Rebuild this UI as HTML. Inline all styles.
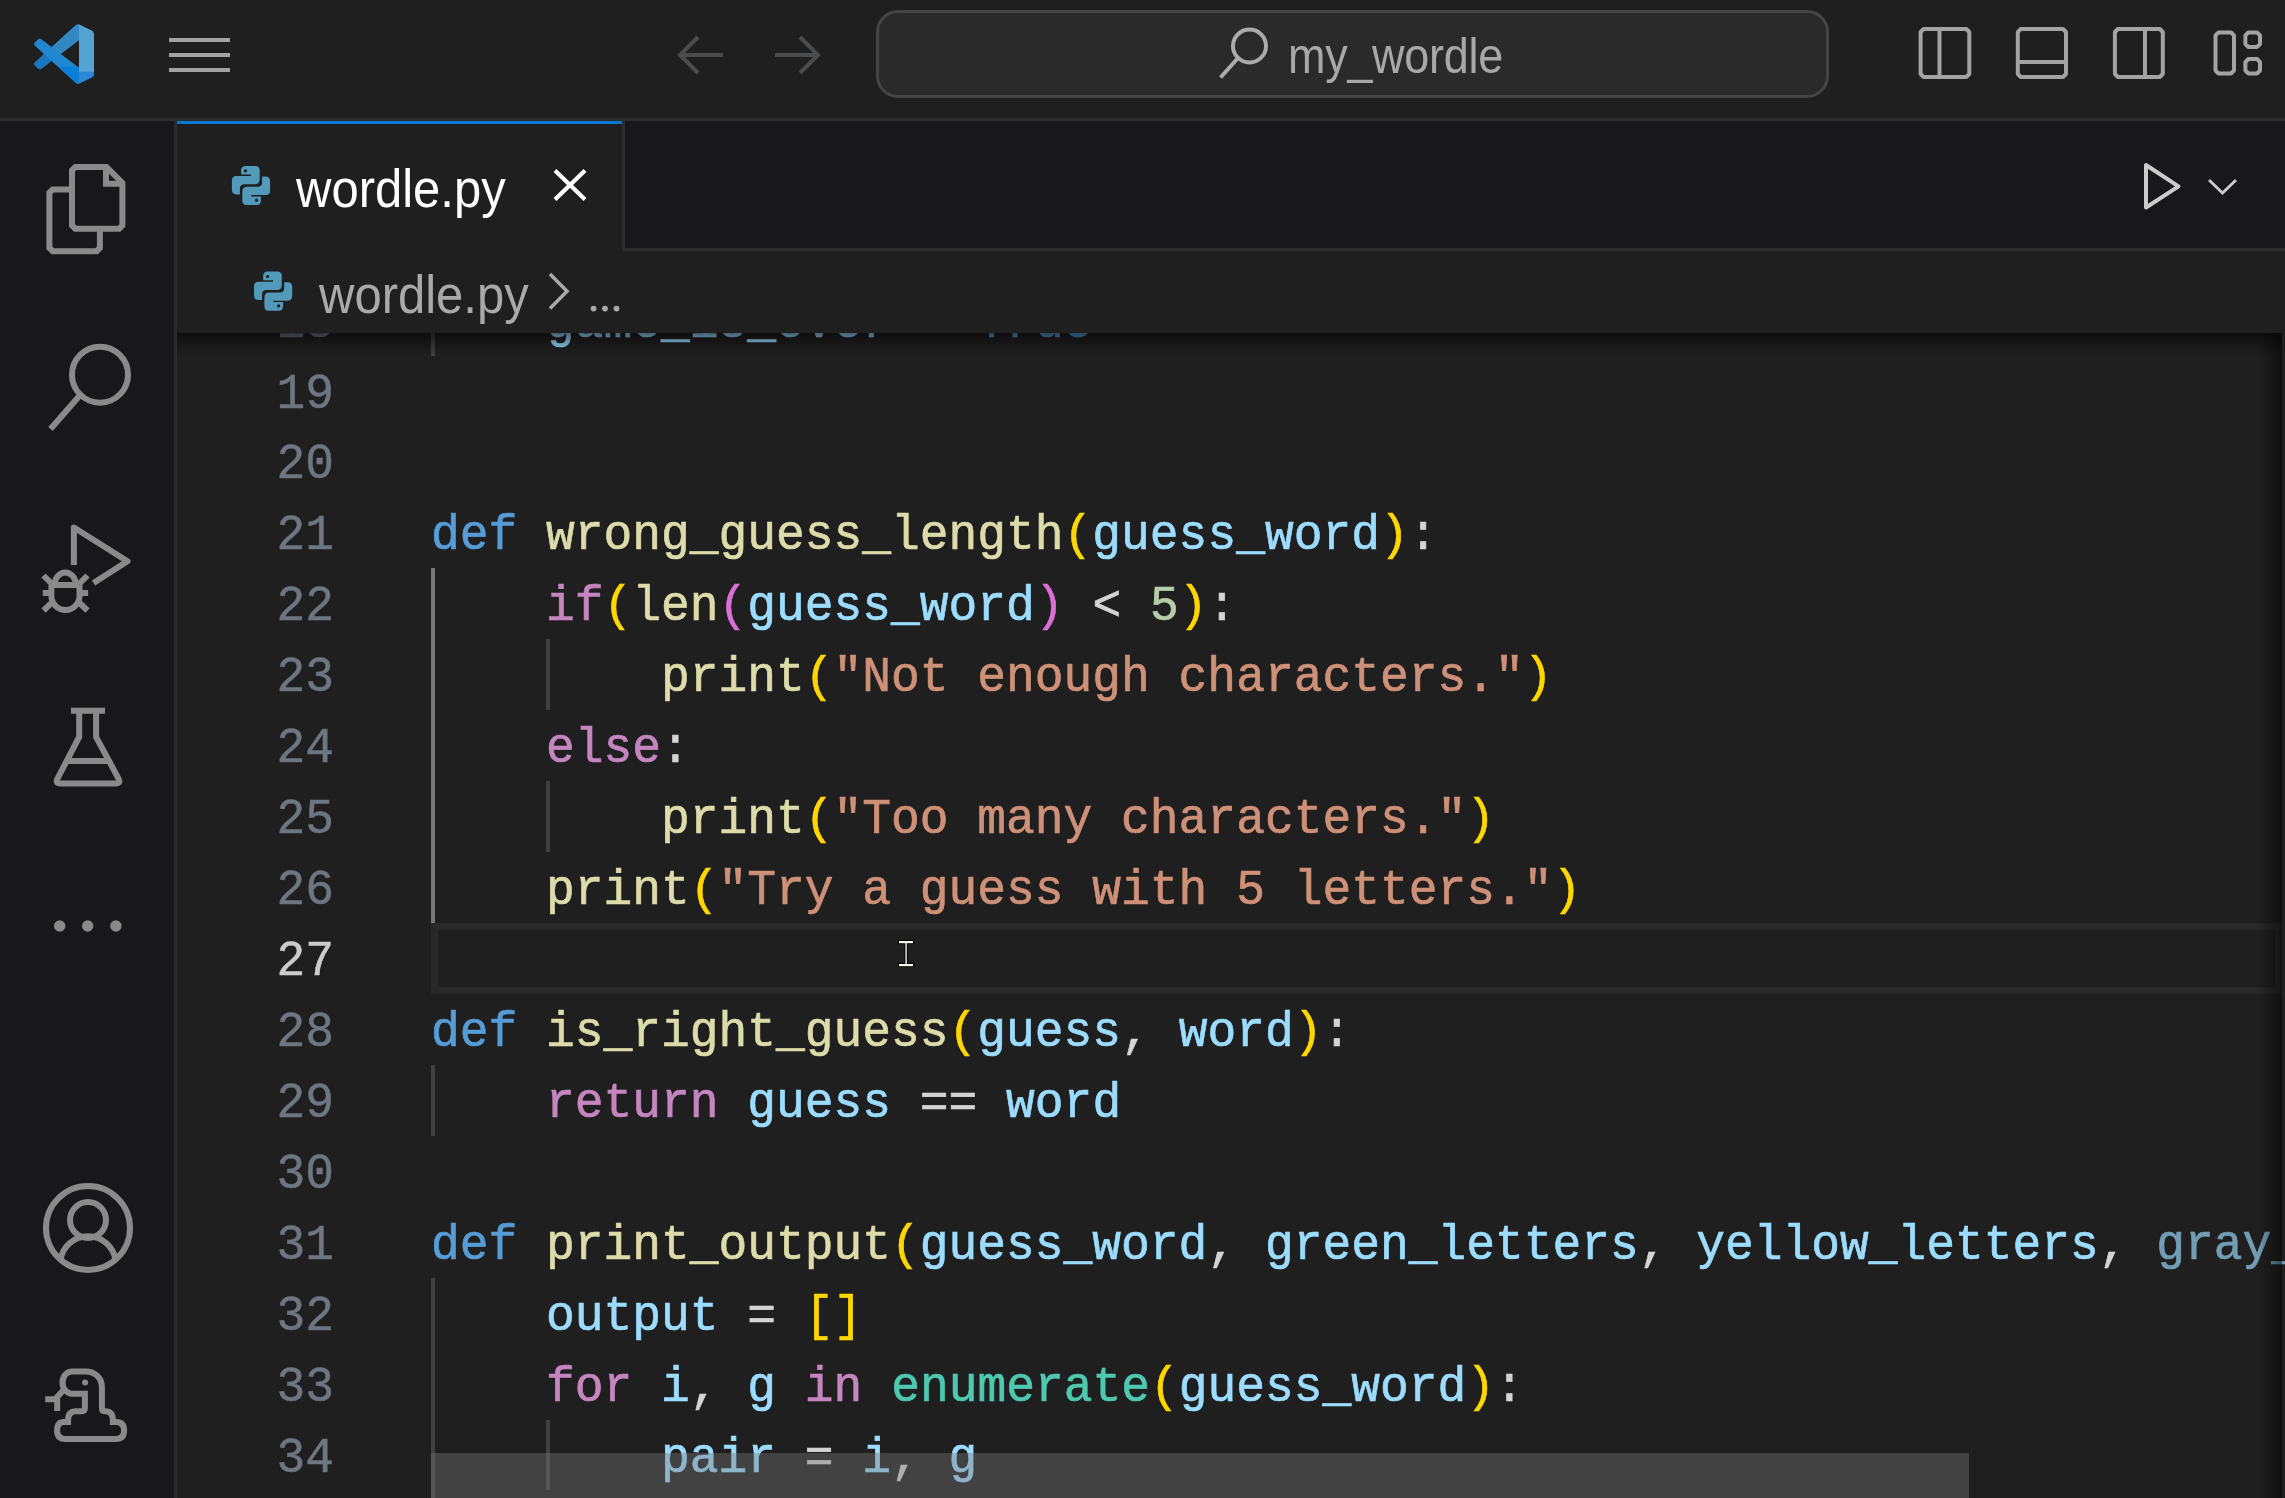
<!DOCTYPE html>
<html><head><meta charset="utf-8">
<style>
html,body{margin:0;padding:0;}
body{width:2285px;height:1498px;overflow:hidden;background:#1f1f1f;position:relative;font-family:"Liberation Sans",sans-serif;}
.abs{position:absolute;}
#titlebar{left:0;top:0;width:2285px;height:118px;background:#1f1f1f;}
#titleborder{left:0;top:118px;width:2285px;height:3px;background:#2b2c2e;}
#activity{left:0;top:121px;width:174px;height:1377px;background:#18181a;}
#actborder{left:174px;top:121px;width:3px;height:1377px;background:#2b2c2e;}
#tabstrip{left:177px;top:121px;width:2108px;height:127px;background:#18181a;}
#tabsborder{left:625px;top:248px;width:1660px;height:3px;background:#2b2c2e;}
#tab{left:177px;top:121px;width:445px;height:130px;background:#1f1f1f;}
#tabblue{left:177px;top:121px;width:445px;height:3px;background:#0078d4;}
#tabrborder{left:622px;top:121px;width:3px;height:130px;background:#2b2c2e;}
#cmd{left:876px;top:10px;width:947px;height:82px;border:3px solid #454545;border-radius:22px;background:#2a2a2a;}
.ui{position:absolute;white-space:pre;line-height:1;}
#tabtext{left:296px;top:162.4px;font-size:49px;color:#ffffff;transform-origin:left top;transform:scaleY(1.1);}
#crumbtext{left:319px;top:268.4px;font-size:49px;color:#a9a9a9;transform-origin:left top;transform:scaleY(1.098);}
#cmdtext{left:1288px;top:31.4px;font-size:45px;color:#a8a8a8;letter-spacing:-0.3px;transform-origin:left top;transform:scaleY(1.0925);}
#editor{left:177px;top:333px;width:2108px;height:1165px;overflow:hidden;}
.ln.act{color:#cccccc}
.ln{position:absolute;left:0;width:155px;text-align:right;font-family:"Liberation Mono",monospace;font-size:50px;color:#6e7681;height:71px;line-height:71px;transform-origin:right center;transform:translate(2px,3px) scaleX(0.9583);-webkit-text-stroke:0.5px currentColor;}
.code{position:absolute;left:254px;white-space:pre;font-family:"Liberation Mono",monospace;font-size:50px;color:#d4d4d4;height:71px;line-height:71px;transform-origin:left center;transform:translateY(3px) scaleX(0.9583);-webkit-text-stroke:0.7px currentColor;}
.k{color:#569cd6}.f{color:#dcdcaa}.v{color:#9cdcfe}.c{color:#c586c0}.s{color:#ce9178}.n{color:#b5cea8}.cl{color:#4ec9b0}.b1{color:#ffd700}.b2{color:#da70d6}.p{color:#d4d4d4}
.guide{position:absolute;width:4px;background:#404040;}
</style></head>
<body>
<div id="titlebar" class="abs"></div>
<div id="titleborder" class="abs"></div>
<div id="activity" class="abs"></div>
<div id="actborder" class="abs"></div>
<div id="tabstrip" class="abs"></div>
<div id="tabsborder" class="abs"></div>
<div id="tab" class="abs"></div>
<div id="tabblue" class="abs"></div>
<div id="tabrborder" class="abs"></div>
<div id="cmd" class="abs"></div>

<div id="tabtext" class="ui">wordle.py</div>
<div id="crumbtext" class="ui">wordle.py</div>
<div id="cmdtext" class="ui">my_wordle</div>

<div id="editor" class="abs">
<div class="guide" style="left:254px;top:-48.4px;height:71px;background:#404040"></div>
<div class="guide" style="left:254px;top:235.35px;height:354.65px;background:#777777"></div>
<div class="guide" style="left:369px;top:306.3px;height:70.9px"></div>
<div class="guide" style="left:369px;top:448.1px;height:70.9px"></div>
<div class="guide" style="left:254px;top:731.9px;height:70.9px"></div>
<div class="guide" style="left:254px;top:944.7px;height:230px"></div>
<div class="guide" style="left:369px;top:1086.6px;height:70.9px"></div>
<div id="curline" class="abs" style="left:254px;top:590px;width:1851px;height:71px;box-sizing:border-box;border:7px solid #282828;"></div>
<div class="ln" style="top:-48.37px">18</div>
<div class="code" style="top:-48.37px">    <span class="v">game_is_over</span><span class="p"> = </span><span class="k">True</span></div>
<div class="ln" style="top:22.56px">19</div>
<div class="ln" style="top:93.49px">20</div>
<div class="ln" style="top:164.42px">21</div>
<div class="code" style="top:164.42px"><span class="k">def</span> <span class="f">wrong_guess_length</span><span class="b1">(</span><span class="v">guess_word</span><span class="b1">)</span><span class="p">:</span></div>
<div class="ln" style="top:235.35px">22</div>
<div class="code" style="top:235.35px">    <span class="c">if</span><span class="b1">(</span><span class="f">len</span><span class="b2">(</span><span class="v">guess_word</span><span class="b2">)</span><span class="p"> < </span><span class="n">5</span><span class="b1">)</span><span class="p">:</span></div>
<div class="ln" style="top:306.28px">23</div>
<div class="code" style="top:306.28px">        <span class="f">print</span><span class="b1">(</span><span class="s">"Not enough characters."</span><span class="b1">)</span></div>
<div class="ln" style="top:377.21px">24</div>
<div class="code" style="top:377.21px">    <span class="c">else</span><span class="p">:</span></div>
<div class="ln" style="top:448.14px">25</div>
<div class="code" style="top:448.14px">        <span class="f">print</span><span class="b1">(</span><span class="s">"Too many characters."</span><span class="b1">)</span></div>
<div class="ln" style="top:519.07px">26</div>
<div class="code" style="top:519.07px">    <span class="f">print</span><span class="b1">(</span><span class="s">"Try a guess with 5 letters."</span><span class="b1">)</span></div>
<div class="ln act" style="top:590.00px">27</div>
<div class="ln" style="top:660.93px">28</div>
<div class="code" style="top:660.93px"><span class="k">def</span> <span class="f">is_right_guess</span><span class="b1">(</span><span class="v">guess</span><span class="p">, </span><span class="v">word</span><span class="b1">)</span><span class="p">:</span></div>
<div class="ln" style="top:731.86px">29</div>
<div class="code" style="top:731.86px">    <span class="c">return</span> <span class="v">guess</span><span class="p"> == </span><span class="v">word</span></div>
<div class="ln" style="top:802.79px">30</div>
<div class="ln" style="top:873.72px">31</div>
<div class="code" style="top:873.72px"><span class="k">def</span> <span class="f">print_output</span><span class="b1">(</span><span class="v">guess_word</span><span class="p">, </span><span class="v">green_letters</span><span class="p">, </span><span class="v">yellow_letters</span><span class="p">, </span><span class="v" style="opacity:0.67">gray_letters</span><span class="b1">)</span><span class="p">:</span></div>
<div class="ln" style="top:944.65px">32</div>
<div class="code" style="top:944.65px">    <span class="v">output</span><span class="p"> = </span><span class="b1">[]</span></div>
<div class="ln" style="top:1015.58px">33</div>
<div class="code" style="top:1015.58px">    <span class="c">for</span> <span class="v">i</span><span class="p">, </span><span class="v">g</span> <span class="c">in</span> <span class="cl">enumerate</span><span class="b1">(</span><span class="v">guess_word</span><span class="b1">)</span><span class="p">:</span></div>
<div class="ln" style="top:1086.51px">34</div>
<div class="code" style="top:1086.51px">        <span class="v">pair</span><span class="p"> = </span><span class="v">i</span><span class="p">, </span><span class="v">g</span></div>
<div class="abs" style="left:0;top:0;width:2105px;height:22px;background:linear-gradient(rgba(0,0,0,0.55),rgba(0,0,0,0));"></div>
<div class="abs" style="left:2081px;top:0;width:24px;height:1165px;background:linear-gradient(90deg,rgba(0,0,0,0),rgba(0,0,0,0.5));"></div>
<div class="abs" style="left:254px;top:1120px;width:1538px;height:45px;background:rgba(121,121,121,0.4);"></div>
</div>

<svg class="abs" style="left:0;top:0;pointer-events:none" width="2285" height="1498" viewBox="0 0 2285 1498">
<defs>
<mask id="vsm" maskUnits="userSpaceOnUse" x="0" y="0" width="100" height="100">
<path fill-rule="evenodd" d="M70.9119 99.3171C72.4869 99.9307 74.2828 99.8914 75.8725 99.1264L96.4608 89.2197C98.6242 88.1787 100 85.9892 100 83.5872V16.4133C100 14.0113 98.6243 11.8218 96.4609 10.7808L75.8725 0.873756C73.7862 -0.130129 71.3446 0.11576 69.5135 1.44695C69.252 1.63711 69.0028 1.84943 68.769 2.08341L29.3551 38.0415L12.1872 25.0096C10.589 23.7965 8.35363 23.8959 6.86933 25.2461L1.36303 30.2549C-0.452552 31.9064 -0.454633 34.7627 1.35853 36.417L16.2471 50.0001L1.35853 63.5832C-0.454633 65.2374 -0.452552 68.0938 1.36303 69.7453L6.86933 74.7541C8.35363 76.1043 10.589 76.2037 12.1872 74.9905L29.3551 61.9587L68.769 97.9167C69.3925 98.5406 70.1246 99.0104 70.9119 99.3171ZM75.0152 27.2989L45.1091 50.0001L75.0152 72.7012V27.2989Z" fill="white"/>
</mask>
<g id="py">
<path d="M16.1 14.6L16.1 10.4Q16.1 5.9 20.6 5.9L30.2 5.9Q34.7 5.9 34.7 10.4L34.7 19.3Q34.7 24.3 29.7 24.3L19.4 24.3Q14.9 24.3 14.9 28.8L14.9 34.4L11.5 34.4Q6.9 34.4 6.9 29.8L6.9 20.6Q6.9 16 11.5 16L25.9 16L25.9 14.6Z" fill="#519aba"/>
<circle cx="20.5" cy="10.8" r="1.6" fill="#1f1f1f"/>
<g transform="rotate(180 26 25.5)">
<path d="M16.1 14.6L16.1 10.4Q16.1 5.9 20.6 5.9L30.2 5.9Q34.7 5.9 34.7 10.4L34.7 19.3Q34.7 24.3 29.7 24.3L19.4 24.3Q14.9 24.3 14.9 28.8L14.9 34.4L11.5 34.4Q6.9 34.4 6.9 29.8L6.9 20.6Q6.9 16 11.5 16L25.9 16L25.9 14.6Z" fill="#519aba"/>
<circle cx="20.5" cy="10.8" r="1.6" fill="#1f1f1f"/>
</g>
</g>
</defs>
<!-- VS Code logo -->
<clipPath id="cb1"><rect x="-5" y="71" width="110" height="40"/></clipPath>
<clipPath id="cb2"><rect x="-5" y="79.7" width="110" height="30"/></clipPath>
<clipPath id="cl"><rect x="-5" y="0" width="34" height="110"/></clipPath>
<g transform="translate(34,24) scale(0.6)">
<g mask="url(#vsm)">
<path d="M96.4614 10.7962L75.8569 0.875542C73.4719 -0.272773 70.6217 0.211611 68.75 2.08333L1.29858 63.5832C-0.515693 65.2373 -0.513607 68.0937 1.30308 69.7452L6.81272 74.754C8.29793 76.1042 10.5347 76.2036 12.1338 74.9905L93.3609 13.3699C96.086 11.3026 100 13.2462 100 16.6667V16.4275C100 14.0265 98.6246 11.8378 96.4614 10.7962Z" fill="#3388c4"/>
<path d="M96.4614 10.7962L75.8569 0.875542C73.4719 -0.272773 70.6217 0.211611 68.75 2.08333L1.29858 63.5832C-0.515693 65.2373 -0.513607 68.0937 1.30308 69.7452L6.81272 74.754C8.29793 76.1042 10.5347 76.2036 12.1338 74.9905L93.3609 13.3699C96.086 11.3026 100 13.2462 100 16.6667V16.4275C100 14.0265 98.6246 11.8378 96.4614 10.7962Z" fill="#1a77bf" clip-path="url(#cl)"/>
<path d="M96.4614 89.2038L75.8569 99.1245C73.4719 100.273 70.6217 99.7884 68.75 97.9167L1.29858 36.4169C-0.515693 34.7627 -0.513607 31.9063 1.30308 30.2548L6.81272 25.246C8.29793 23.8958 10.5347 23.7964 12.1338 25.0095L93.3609 86.6301C96.086 88.6974 100 86.7538 100 83.3334V83.5726C100 85.9735 98.6246 88.1622 96.4614 89.2038Z" fill="#2087d0"/>
<path d="M96.4614 89.2038L75.8569 99.1245C73.4719 100.273 70.6217 99.7884 68.75 97.9167L1.29858 36.4169C-0.515693 34.7627 -0.513607 31.9063 1.30308 30.2548L6.81272 25.246C8.29793 23.8958 10.5347 23.7964 12.1338 25.0095L93.3609 86.6301C96.086 88.6974 100 86.7538 100 83.3334V83.5726C100 85.9735 98.6246 88.1622 96.4614 89.2038Z" fill="#0b7fd8" clip-path="url(#cb1)"/>
<path d="M75.8578 99.1263C73.4721 100.274 70.6219 99.7885 68.75 97.9166C71.0564 100.223 75 98.5895 75 95.3278V4.67213C75 1.41039 71.0564 -0.223106 68.75 2.08329C70.6219 0.211402 73.4721 -0.273666 75.8578 0.873633L96.4587 10.7807C98.6234 11.8217 100 14.0112 100 16.4132V83.5871C100 85.9891 98.6234 88.1786 96.4586 89.2196L75.8578 99.1263Z" fill="#55a3d2"/>
<path d="M75.8578 99.1263C73.4721 100.274 70.6219 99.7885 68.75 97.9166C71.0564 100.223 75 98.5895 75 95.3278V4.67213C75 1.41039 71.0564 -0.223106 68.75 2.08329C70.6219 0.211402 73.4721 -0.273666 75.8578 0.873633L96.4587 10.7807C98.6234 11.8217 100 14.0112 100 16.4132V83.5871C100 85.9891 98.6234 88.1786 96.4586 89.2196L75.8578 99.1263Z" fill="#2a88d6" clip-path="url(#cb2)"/>
</g>
</g>
<!-- hamburger -->
<g fill="#a3a3a3"><rect x="169" y="38" width="61" height="4"/><rect x="169" y="53" width="61" height="4"/><rect x="169" y="68" width="61" height="4"/></g>
<!-- nav arrows -->
<g stroke="#4a4b4d" stroke-width="4" fill="none">
<path d="M698 37L680 55L698 73M680 55L723 55"/>
<path d="M775 55L818 55M800 37L818 55L800 73"/>
</g>
<!-- search icon in command center -->
<g stroke="#ababab" stroke-width="4" fill="none">
<circle cx="1249.5" cy="46" r="16.5"/>
<path d="M1238 58L1220.5 77.5"/>
</g>
<!-- layout icons -->
<g stroke="#a3a3a3" stroke-width="4" fill="none" stroke-linejoin="bevel">
<path d="M1923.6 29L1966.3 29L1969.3 32L1969.3 74L1966.3 77L1923.6 77L1920.6 74L1920.6 32Z M1939.5 29L1939.5 77"/>
<path d="M2020.8 29L2063 29L2066 32L2066 74L2063 77L2020.8 77L2017.8 74L2017.8 32Z M2017.8 62L2066 62"/>
<path d="M2117.9 29L2159.8 29L2162.8 32L2162.8 74L2159.8 77L2117.9 77L2114.9 74L2114.9 32Z M2145 29L2145 77"/>
<path d="M2218.5 32.4L2231 32.4L2234 35.4L2234 70.5L2231 73.5L2218.5 73.5L2215.5 70.5L2215.5 35.4Z"/>
<path d="M2248.4 32.4L2257 32.4L2260 35.4L2260 44L2257 47L2248.4 47L2245.4 44L2245.4 35.4Z"/>
<path d="M2248.4 59L2257 59L2260 62L2260 70.5L2257 73.5L2248.4 73.5L2245.4 70.5L2245.4 62Z"/>
</g>
<!-- activity bar icons -->
<g stroke="#8a8a8a" stroke-width="6" fill="none" stroke-linejoin="miter">
<path d="M75.3 167L106.5 167L122.4 183L122.4 225.4L119.1 228.7L75.3 228.7L72 225.4L72 170.3Z"/>
<path d="M106 167L106 183.7L122.4 183.7"/>
<path d="M72 189.5L52.7 189.5L49.4 192.8L49.4 247.9L52.7 251.2L96.6 251.2L99.9 247.9L99.9 228.7"/>
<circle cx="100" cy="374.7" r="28"/>
<path d="M81.5 393.5L50.5 429"/>
<path d="M73.9 565L73.9 527.5L127.5 561.3L93.5 583" stroke-linejoin="round"/>
<path d="M54.6 585A10.65 12.5 0 0 1 75.9 585"/>
<path d="M51.4 585L79.5 585M51.4 585L51.4 596A14.05 14 0 0 0 79.5 596L79.5 585"/>
<path d="M43.5 575.5L52 584M87.5 575.5L79 584M42.8 593L51.4 593M79.5 593L88.1 593M43.5 610.5L52.5 602M87.5 610.5L78.5 602"/>
<path d="M71 710.8L105 710.8"/>
<path d="M79.2 713L79.2 737L57.5 778.5Q55 783.6 60.5 783.6L115.5 783.6Q121 783.6 118.5 778.5L96.1 737L96.1 713"/>
<path d="M67.5 761L108.5 761"/>
<circle cx="88" cy="1228" r="42"/>
<circle cx="88" cy="1220" r="18"/>
<path d="M60.5 1260A27.8 27.8 0 0 1 115.5 1260"/>
<path d="M101.9 1407.7L101.9 1387C101.9 1378 95 1371.5 86 1371.5L72 1371.5C66.5 1371.5 62.5 1376.5 62.5 1382.6C62.5 1389 67 1393.7 72 1393.7L84.9 1393.7L84.9 1408Q84.9 1411.3 81 1411.3L76 1411.3Q68.1 1411.3 68.1 1420L68.1 1422L64 1422Q57.1 1422 57.1 1430.5Q57.1 1438.9 65 1438.9L116 1438.9Q124.1 1438.9 124.1 1430.5Q124.1 1422 116 1422L112.9 1422L112.9 1420Q112.9 1411.3 105 1411.3Q101.9 1411.3 101.9 1407.7"/>
<path d="M64.5 1389L57.2 1397L57.2 1410.9M45.2 1399.3L57.2 1399.3"/>
</g>
<g fill="#8a8a8a">
<circle cx="59.7" cy="926" r="5.7"/><circle cx="87.7" cy="926" r="5.7"/><circle cx="115.9" cy="926" r="5.7"/>
<circle cx="85.1" cy="1382.6" r="3"/>
</g>
<!-- python icons -->
<g transform="translate(225,160)"><use href="#py"/></g>
<g transform="translate(247.1,265.7)"><use href="#py"/></g>
<!-- tab close -->
<path d="M555 170.5L585 199.5M585 170.5L555 199.5" stroke="#ffffff" stroke-width="4.2" fill="none"/>
<!-- breadcrumb chevron and dots -->
<path d="M550 274L567 291.3L550 308.6" stroke="#a9a9a9" stroke-width="3.5" fill="none"/>
<g fill="#a9a9a9"><circle cx="593.6" cy="308.6" r="2.9"/><circle cx="605" cy="308.6" r="2.9"/><circle cx="616.5" cy="308.6" r="2.9"/></g>
<!-- run button -->
<path d="M2146 165L2146 207.5L2178.5 186.4Z" stroke="#cccccc" stroke-width="4" fill="none" stroke-linejoin="round"/>
<path d="M2209 180L2222.5 193L2236 180" stroke="#cccccc" stroke-width="2.8" fill="none"/>
<!-- I-beam cursor -->
<g stroke="#000000" stroke-width="1.2" fill="#f8f8ea">
<rect x="898.5" y="940.5" width="15" height="3"/>
<rect x="898.5" y="963.5" width="15" height="3"/>
<rect x="904.8" y="942" width="2.6" height="23"/>
</g>
<g fill="#f8f8ea"><rect x="899" y="941" width="14" height="2.2"/><rect x="899" y="964" width="14" height="2.2"/></g>
</svg>

</body></html>
